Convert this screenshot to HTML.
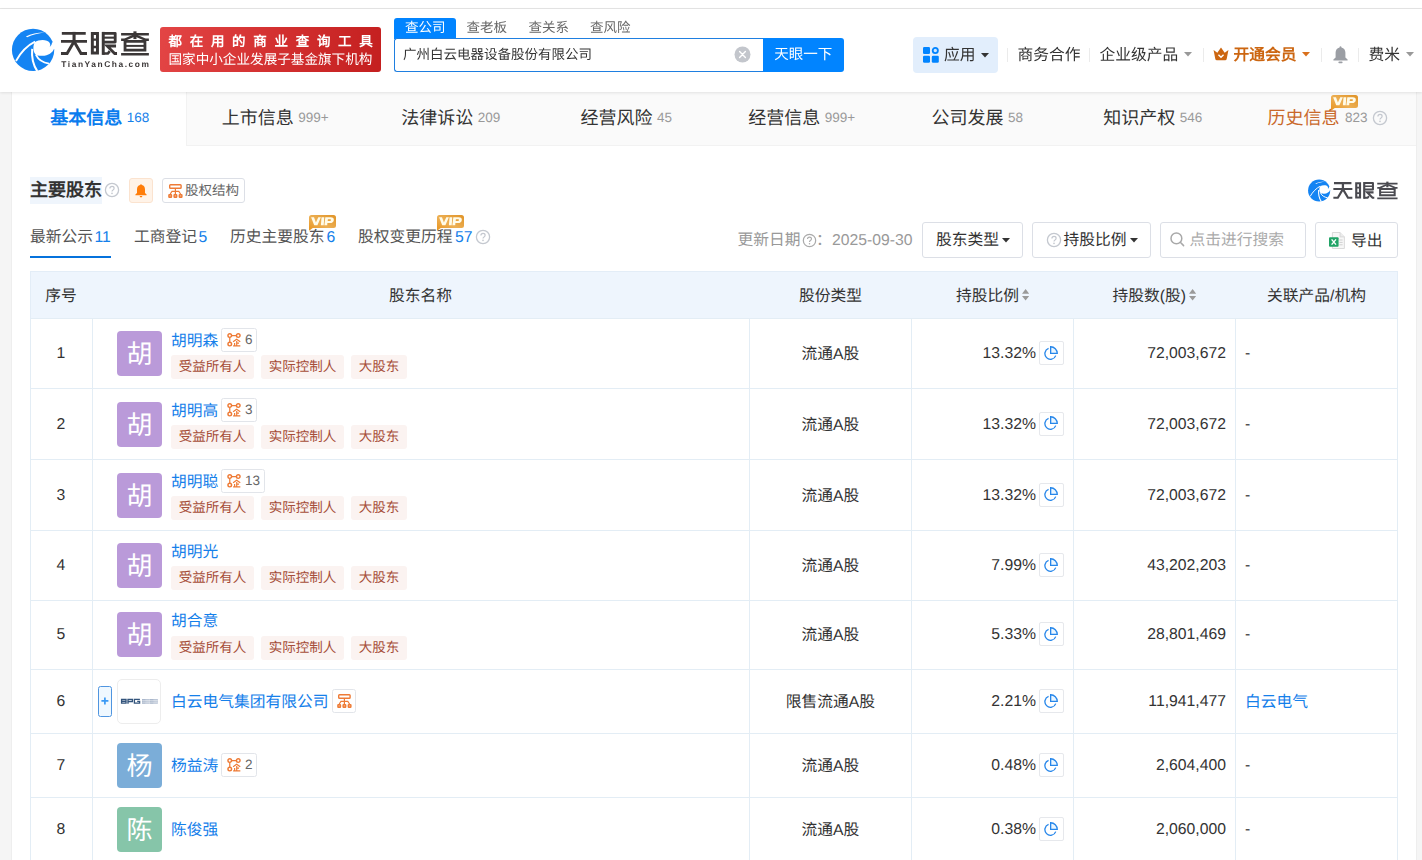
<!DOCTYPE html>
<html lang="zh-CN">
<head>
<meta charset="utf-8">
<title>天眼查</title>
<style>
*{box-sizing:border-box;margin:0;padding:0}
html,body{width:1422px;height:860px;overflow:hidden}
body{position:relative;text-rendering:geometricPrecision;opacity:.9999;font-weight:350;background:#f5f5f5;font-family:"Liberation Sans",sans-serif;color:#333;font-size:15.75px}
.abs{position:absolute}
.t{position:absolute;white-space:nowrap;line-height:1}
svg{display:block}
/* header */
#top{left:0;top:0;width:1422px;height:8px;background:#fff}
#topline{left:0;top:8px;width:1422px;height:1px;background:#e6e6e6}
#header{left:0;top:9px;width:1422px;height:83px;background:#fff;box-shadow:0 1px 3px rgba(0,0,0,.10);z-index:5}
#banner{left:160px;top:27px;width:221px;height:45px;border-radius:3px;background:linear-gradient(100deg,#e34545 0%,#d22f2f 55%,#c41f1f 100%);z-index:6;color:#fff}
.sep{position:absolute;top:48px;width:1px;height:14px;background:#ebebeb;z-index:6}
.hz{z-index:6}
/* card */
#card{left:11px;top:92px;width:1406px;height:768px;background:#fff;border-left:1px solid #eee;border-right:1px solid #eee}
#tabbar{left:12px;top:92px;width:1404px;height:54px;background:#fafafa;border-bottom:1px solid #f2f2f2}
#tabact{left:12px;top:92px;width:174.6px;height:54px;background:#fff;border-right:1px solid #f2f2f2}
.tab{position:absolute;top:92px;height:54px;width:175.5px;text-align:center;white-space:nowrap;line-height:52px;font-size:18px;color:#333}
.tab i{font-style:normal;font-size:13.5px;color:#999;margin-left:4.4px;position:relative;top:-2px}
/* table */
#thead{left:30px;top:271px;width:1368px;height:47px;background:#eef5fd;border:1px solid #e3edf7;border-bottom:none}
.hl{position:absolute;left:30px;width:1368px;height:1px;background:#e3edf5}
.vl{position:absolute;top:318px;width:1px;height:542px;background:#e3edf5}
.th{position:absolute;top:271px;height:47px;line-height:51px;text-align:center;white-space:nowrap;font-size:15.75px;color:#333}
.c{position:absolute;white-space:nowrap;font-size:15.75px;line-height:20px;height:20px;color:#333}
.num{left:30px;width:62px;text-align:center}
.typ{left:750px;width:161px;text-align:center}
.pct{left:912px;width:124px;text-align:right}
.cnt{left:1074px;width:152px;text-align:right}
.rel{left:1245px}
.av{position:absolute;left:117px;width:45px;height:45px;border-radius:4px;color:#fff;font-size:26px;line-height:47px;text-align:center}
.nm{position:absolute;left:171px;font-size:15.75px;line-height:20px;color:#1580ea;white-space:nowrap}
.bd{position:absolute;height:24px;border:1px solid #e2e5ea;border-radius:2.5px}
.bd span{position:absolute;left:23px;top:4px;font-size:13.5px;line-height:14px;color:#666}
.tag{position:absolute;height:24px;border-radius:3px;background:#fbf3f1;color:#a64d38;font-size:13.5px;line-height:23px;text-align:center;white-space:nowrap}
.pie{position:absolute;left:1039.3px;width:24.6px;height:24.4px;border:1px solid #e6e8ec;border-radius:2px;background:#fff}
.btn{position:absolute;top:222px;height:36px;border:1px solid #dcdfe6;border-radius:3px}
</style>
</head>
<body>
<div class="abs" id="top"></div>
<div class="abs" id="topline"></div>
<div class="abs" id="header"></div>
<!-- logo swirl -->
<svg class="abs hz" style="left:8px;top:24px" width="52" height="52" viewBox="0 0 860 860">
<defs><g id="swirl">
<circle cx="415" cy="428" r="350" fill="#1484f3"/>
<path d="M440,300 C520,250 650,250 688,312 C702,340 702,362 690,382 L800,372 L800,418 L762,408 C742,470 660,530 560,526 C500,522 470,520 470,520 C428,480 398,400 440,300 Z" fill="#fff"/>
<path d="M688,384 C712,362 729,335 727,308 L800,290 L800,414 L764,408 Z" fill="#fff"/>
<path d="M296,206 C380,160 500,138 606,140 C500,156 400,178 318,218 Z" fill="#fff"/>
<path d="M448,292 C330,350 210,470 132,612" fill="none" stroke="#fff" stroke-width="30"/>
<path d="M400,410 C388,540 420,680 484,780" fill="none" stroke="#fff" stroke-width="34"/>
<path d="M462,512 C500,590 580,640 678,656" fill="none" stroke="#fff" stroke-width="30"/>
</g>
<g id="tyc" fill="none" stroke-linecap="butt" stroke-linejoin="miter">
<path d="M97,119 H437 M85,233 H455" stroke-width="42"/>
<path d="M271,98 V250" stroke-width="44"/>
<path d="M271,236 L172,405 H85 M271,236 L370,405 H455" stroke-width="42"/>
<path d="M531,121 H604 V399 H531 Z" stroke-width="42"/>
<path d="M531,208 H604 M531,312 H604" stroke-width="34"/>
<path d="M686,98 V425" stroke-width="42"/>
<path d="M686,118 H856 V243 H686" stroke-width="40" stroke-linejoin="round"/>
<path d="M686,180 H856" stroke-width="30"/>
<path d="M868,299 H742 L848,405 H882" stroke-width="40"/>
<path d="M686,405 H752 L778,372" stroke-width="38"/>
<path d="M940,131 H1335 M940,416 H1335" stroke-width="34"/>
<path d="M1137,90 V200" stroke-width="44"/>
<path d="M940,210 H988 L1122,150 M1335,210 H1288 L1152,150" stroke-width="34"/>
<path d="M996,233 H1279 V357 H996 Z" stroke-width="40"/>
<path d="M996,297 H1279" stroke-width="28"/>
</g></defs>
<use href="#swirl"/></svg>
<svg class="abs hz" style="left:55px;top:25px" width="100" height="50" viewBox="0 0 1422 711"><use href="#tyc" stroke="#3b3737"/></svg>
<div class="t hz" style="left:61.3px;top:60px;font-size:8.4px;font-weight:bold;letter-spacing:1.56px;color:#3b3737">TianYanCha.com</div>
<!-- banner -->
<div class="abs" id="banner">
<div class="t" style="left:8.5px;top:8px;font-family:'Liberation Serif',serif;font-weight:bold;font-size:13.5px;letter-spacing:7.7px">都在用的商业查询工具</div>
<div class="t" style="left:8.5px;top:26px;font-size:13.6px">国家中小企业发展子基金旗下机构</div>
</div>
<!-- search -->
<div class="abs hz" style="left:394px;top:18px;width:62px;height:21px;background:#0084ff;border-radius:3px 3px 0 0"></div>
<div class="t hz" style="left:405px;top:21.2px;font-size:13.5px;color:#fff">查公司</div>
<div class="t hz" style="left:466.5px;top:21.2px;font-size:13.5px;color:#666">查老板</div>
<div class="t hz" style="left:528.5px;top:21.2px;font-size:13.5px;color:#666">查关系</div>
<div class="t hz" style="left:590px;top:21.2px;font-size:13.5px;color:#666">查风险</div>
<div class="abs hz" style="left:394px;top:38px;width:370px;height:34px;border:1px solid #1f7fe0;border-right:none;border-radius:3px 0 0 3px;background:#fff"></div>
<div class="t hz" style="left:403px;top:48.2px;font-size:13.5px;color:#333">广州白云电器设备股份有限公司</div>
<svg class="abs hz" style="left:733.5px;top:45.5px" width="17" height="17" viewBox="0 0 17 17"><circle cx="8.5" cy="8.5" r="8" fill="#c3c6cc"/><path d="M5.6,5.6 L11.4,11.4 M11.4,5.6 L5.6,11.4" stroke="#fff" stroke-width="1.4" stroke-linecap="round"/></svg>
<div class="abs hz" style="left:763px;top:38px;width:81px;height:34px;background:#0084ff;border-radius:0 3px 3px 0"></div>
<div class="t hz" style="left:774.3px;top:48.2px;font-size:14.5px;color:#fff">天眼一下</div>
<!-- right nav -->
<div class="abs hz" style="left:913px;top:37px;width:85px;height:36px;background:#e2eefc;border-radius:4px"></div>
<svg class="abs hz" style="left:923px;top:47px" width="16" height="16" viewBox="0 0 16 16"><rect x="0" y="0" width="7" height="7" rx="1.3" fill="#0084ff"/><rect x="0" y="8.8" width="7" height="7" rx="1.3" fill="#0084ff"/><rect x="8.8" y="8.8" width="7" height="7" rx="1.3" fill="#0084ff"/><circle cx="12.3" cy="3.5" r="2.6" fill="#cfe6ff" stroke="#0084ff" stroke-width="1.8"/></svg>
<div class="t hz" style="left:944px;top:47.5px;font-size:15.75px;color:#333">应用</div>
<svg class="abs hz" style="left:981px;top:53px" width="8" height="5" viewBox="0 0 8 5"><path d="M0,0 H8 L4,4.6 Z" fill="#333"/></svg>
<div class="sep" style="left:1007px"></div>
<div class="t hz" style="left:1017.5px;top:47.5px;font-size:15.75px;color:#333">商务合作</div>
<div class="sep" style="left:1089px"></div>
<div class="t hz" style="left:1099.5px;top:47.5px;font-size:15.75px;color:#333">企业级产品</div>
<svg class="abs hz" style="left:1183.5px;top:52px" width="8" height="5" viewBox="0 0 8 5"><path d="M0,0 H8 L4,4.6 Z" fill="#999"/></svg>
<div class="sep" style="left:1203px"></div>
<svg class="abs hz" style="left:1212.8px;top:47.1px" width="16" height="13.6" viewBox="0 0 17 14" preserveAspectRatio="none"><path d="M0.6,3.2 L4.6,6 L8.5,0.4 L12.4,6 L16.4,3.2 L14.6,12 Q14.4,13.6 12.8,13.6 H4.2 Q2.6,13.6 2.4,12 Z" fill="#cc6611"/><path d="M5.8,8 L8.5,10.6 L11.2,8" fill="none" stroke="#fff" stroke-width="1.5"/></svg>
<div class="t hz" style="left:1233.5px;top:47.5px;font-size:15.75px;font-weight:bold;color:#cc6611">开通会员</div>
<svg class="abs hz" style="left:1301.5px;top:52px" width="8" height="5" viewBox="0 0 8 5"><path d="M0,0 H8 L4,4.6 Z" fill="#d9701c"/></svg>
<div class="sep" style="left:1321px"></div>
<svg class="abs hz" style="left:1333px;top:46px" width="15" height="18" viewBox="0 0 15 18"><path d="M7.5,0.3 Q8.4,0.3 8.5,1.4 C11,2 12.4,4 12.4,6.6 V11.6 L14.6,13.6 V14.4 H0.4 V13.6 L2.6,11.6 V6.6 C2.6,4 4,2 6.5,1.4 Q6.6,0.3 7.5,0.3 Z" fill="#9b9ea4"/><rect x="5.4" y="15.6" width="4.2" height="1.6" rx="0.8" fill="#9b9ea4"/></svg>
<div class="sep" style="left:1358px"></div>
<div class="t hz" style="left:1368.5px;top:47.5px;font-size:15.75px;color:#333">费米</div>
<svg class="abs hz" style="left:1405.5px;top:52px" width="8" height="5" viewBox="0 0 8 5"><path d="M0,0 H8 L4,4.6 Z" fill="#999"/></svg>

<div class="abs" id="card"></div>
<div class="abs" id="tabbar"></div>
<div class="abs" id="tabact"></div>
<div class="tab" style="left:12px;color:#0a7cee;font-weight:bold">基本信息<i style="color:#1580ea;font-weight:normal">168</i></div>
<div class="tab" style="left:187.5px">上市信息<i>999+</i></div>
<div class="tab" style="left:363px">法律诉讼<i>209</i></div>
<div class="tab" style="left:538.5px">经营风险<i>45</i></div>
<div class="tab" style="left:714px">经营信息<i>999+</i></div>
<div class="tab" style="left:889.5px">公司发展<i>58</i></div>
<div class="tab" style="left:1065px">知识产权<i>546</i></div>
<div class="t" style="left:1267.5px;top:108.5px;font-size:18px;color:#c9682a">历史信息</div>
<div class="t" style="left:1345px;top:110.6px;font-size:13.5px;color:#999">823</div>
<svg class="abs" style="left:1372px;top:110px" width="16" height="16" viewBox="0 0 16 16"><use href="#qm" color="#c4c8cf"/></svg>
<svg class="abs" style="left:1331px;top:95px" width="27" height="16" viewBox="0 0 27 16"><use href="#vip"/></svg>

<svg width="0" height="0" style="position:absolute"><defs>
<g id="qm"><circle cx="8" cy="8" r="6.6" fill="none" stroke="currentColor" stroke-width="1.3"/><path d="M5.9,6.5 Q5.9,4.4 8,4.4 Q10.1,4.4 10.1,6.2 Q10.1,7.3 9,8 Q8,8.6 8,9.6" fill="none" stroke="currentColor" stroke-width="1.2"/><circle cx="8" cy="11.4" r="0.8" fill="currentColor"/></g>
<linearGradient id="vg" x1="0" y1="1" x2="1" y2="0"><stop offset="0" stop-color="#e8931c"/><stop offset="0.45" stop-color="#edb055"/><stop offset="1" stop-color="#e09326"/></linearGradient>
<g id="vip"><path d="M2.5,0 H24.5 Q27,0 27,2.5 V10.5 Q27,13 24.5,13 H3.8 L0,15.7 V2.5 Q0,0 2.5,0 Z" fill="url(#vg)"/><path d="M2.1,2.2 H5.0 L6.9,7.6 L9.3,2.2 H11.9 L8.4,10.3 H5.2 Z M12.5,2.2 H15.3 L14.7,10.3 H11.9 Z M16.3,2.2 H21.6 Q25.2,2.2 24.8,5.2 Q24.4,8.0 21.0,8.0 H18.4 L18.2,10.3 H15.4 Z M18.9,4.3 L18.7,6.0 H20.9 Q21.9,6.0 22.0,5.1 Q22.1,4.3 21.1,4.3 Z" fill="#fffbe8" fill-rule="evenodd"/></g>
<g id="org" fill="none" stroke="#ee7b36" stroke-width="1.4"><rect x="1.7" y="0.7" width="11.4" height="3.5" rx="0.8"/><path d="M7.4,4.4 V7.4 M2.2,10 L4,7.4 H10.8 L12.6,10 M7.4,7.4 V10" stroke-width="1.2"/><rect x="0.9" y="10.6" width="2.6" height="2.7" rx="0.5" fill="#f7b48a"/><rect x="6.1" y="10.6" width="2.6" height="2.7" rx="0.5" fill="#f7b48a"/><rect x="11.3" y="10.6" width="2.6" height="2.7" rx="0.5" fill="#f7b48a"/></g>
<g id="gq" fill="none" stroke="#ee7b36" stroke-width="1.5"><circle cx="2.9" cy="2.7" r="1.9"/><circle cx="11.8" cy="2.7" r="1.9"/><circle cx="2.9" cy="11.6" r="1.9"/><path d="M4.8,2.7 H9.9 M2.9,4.6 V9.7" stroke-width="1.3"/><path d="M6.4,9.2 L10.1,6.5 L13.9,9.2 M10.2,8.4 V13.4 M8,10.6 V13.4 M10.2,10.6 H12.6 M6.4,13.6 H14" stroke-width="1.25"/></g>
<g id="piei" fill="none" stroke="#2686ea" stroke-width="1.3"><path d="M4.58,2.44 A5.6,5.6 0 1 0 11.76,9.62"/><path d="M6.65,7.35 V0.75 A6.6,6.6 0 0 1 13.25,7.35 Z" fill="#eaf6ff"/></g>
<g id="sorti"><path d="M3.6,0 L7.2,4.7 H0 Z M0,6.9 H7.2 L3.6,11.6 Z" fill="#9a9a9a"/></g>
</defs></svg>
<!-- section title -->
<div class="abs" style="left:30px;top:177px;width:72px;height:27px;background:#eff5fc"></div>
<div class="t" style="left:30px;top:180.5px;font-size:18px;font-weight:bold;color:#333">主要股东</div>
<svg class="abs" style="left:104px;top:182px" width="16" height="16" viewBox="0 0 16 16"><use href="#qm" color="#c4c8cf"/></svg>
<div class="abs" style="left:129px;top:178px;width:24px;height:24.5px;background:#fff3e8;border:1px solid #fbe3cf;border-radius:3px"></div>
<svg class="abs" style="left:135px;top:183.5px" width="12" height="14" viewBox="0 0 12 14"><path d="M6,0.2 Q6.8,0.2 6.9,1.1 C9,1.6 10,3.3 10,5.4 V9 L11.6,10.6 V11.2 H0.4 V10.6 L2,9 V5.4 C2,3.3 3,1.6 5.1,1.1 Q5.2,0.2 6,0.2 Z" fill="#ff7d0a"/><path d="M4.6,12 H7.4 Q7.2,13.4 6,13.4 Q4.8,13.4 4.6,12 Z" fill="#ff7d0a"/></svg>
<div class="abs" style="left:162px;top:178px;width:83px;height:24.5px;background:#fff;border:1px solid #dcdfe6;border-radius:3px"></div>
<svg class="abs" style="left:167.5px;top:183.5px" width="15" height="14" viewBox="0 0 15 14"><use href="#org"/></svg>
<div class="t" style="left:185px;top:183.5px;font-size:13.5px;color:#666">股权结构</div>
<!-- watermark logo -->
<svg class="abs" style="left:1305.9px;top:177.3px" width="27.2" height="27.2" viewBox="0 0 860 860"><use href="#swirl"/></svg>
<svg class="abs" style="left:1328.9px;top:177.1px" width="73" height="36.5" viewBox="0 0 1422 711"><use href="#tyc" stroke="#4a4a50"/></svg>
<!-- sub tabs -->
<div class="t" style="left:30px;top:230px;font-size:15.75px;color:#555">最新公示</div>
<div class="t" style="left:94.5px;top:230px;font-size:15.75px;color:#1580ea">11</div>
<div class="abs" style="left:30px;top:256px;width:81px;height:2px;background:#0572dc"></div>
<div class="t" style="left:134px;top:230px;font-size:15.75px;color:#555">工商登记</div>
<div class="t" style="left:198.5px;top:230px;font-size:15.75px;color:#1580ea">5</div>
<div class="t" style="left:230px;top:230px;font-size:15.75px;color:#555">历史主要股东</div>
<div class="t" style="left:326.5px;top:230px;font-size:15.75px;color:#1580ea">6</div>
<svg class="abs" style="left:309px;top:214.8px" width="27" height="16" viewBox="0 0 27 16"><use href="#vip"/></svg>
<div class="t" style="left:358px;top:230px;font-size:15.75px;color:#555">股权变更历程</div>
<div class="t" style="left:455px;top:230px;font-size:15.75px;color:#1580ea">57</div>
<svg class="abs" style="left:475px;top:229px" width="16" height="16" viewBox="0 0 16 16"><use href="#qm" color="#c4c8cf"/></svg>
<svg class="abs" style="left:437px;top:214.8px" width="27" height="16" viewBox="0 0 27 16"><use href="#vip"/></svg>
<!-- right controls -->
<div class="t" style="left:737.5px;top:232.6px;font-size:15.75px;color:#999">更新日期</div>
<svg class="abs" style="left:802px;top:232.5px" width="15" height="15" viewBox="0 0 16 16"><use href="#qm" color="#aaa"/></svg>
<div class="t" style="left:816px;top:232.6px;font-size:15.75px;color:#999">：</div>
<div class="t" style="left:832px;top:232.6px;font-size:15.75px;color:#999">2025-09-30</div>
<div class="btn" style="left:922px;width:101px"></div>
<div class="t" style="left:936px;top:232.6px;font-size:15.75px;color:#333">股东类型</div>
<svg class="abs" style="left:1002px;top:238px" width="8" height="5" viewBox="0 0 8 5"><path d="M0,0 H8 L4,4.6 Z" fill="#333"/></svg>
<div class="btn" style="left:1032px;width:119px"></div>
<svg class="abs" style="left:1046px;top:232px" width="16" height="16" viewBox="0 0 16 16"><use href="#qm" color="#c4c8cf"/></svg>
<div class="t" style="left:1063.5px;top:232.6px;font-size:15.75px;color:#333">持股比例</div>
<svg class="abs" style="left:1130px;top:238px" width="8" height="5" viewBox="0 0 8 5"><path d="M0,0 H8 L4,4.6 Z" fill="#333"/></svg>
<div class="btn" style="left:1160px;width:146px"></div>
<svg class="abs" style="left:1169px;top:231px" width="17" height="17" viewBox="0 0 17 17"><circle cx="7.4" cy="7.4" r="5.4" fill="none" stroke="#a9a9a9" stroke-width="1.5"/><path d="M11.3,11.3 L14.6,14.6" stroke="#a9a9a9" stroke-width="1.5" stroke-linecap="round"/></svg>
<div class="t" style="left:1189.5px;top:232.6px;font-size:15.75px;color:#aaa">点击进行搜索</div>
<div class="btn" style="left:1315px;width:83px"></div>
<svg class="abs" style="left:1329px;top:231.5px" width="16" height="17" viewBox="0 0 16 17"><path d="M3.4,0.5 H11 L15.4,4.9 V16.5 H3.4 Z" fill="#f7f7f7" stroke="#d6d6d6" stroke-width="0.9"/><path d="M11,0.5 V4.9 H15.4" fill="#ececec" stroke="#d6d6d6" stroke-width="0.9"/><path d="M10.4,8 H13.6 M10.4,10.4 H13.6 M10.4,12.8 H13.6" stroke="#cfcfcf" stroke-width="1"/><rect x="0" y="5.2" width="9.6" height="9.6" rx="1" fill="#21a366"/><path d="M2.6,7.4 L7,12.6 M7,7.4 L2.6,12.6" stroke="#fff" stroke-width="1.4"/></svg>
<div class="t" style="left:1351px;top:233.6px;font-size:15.75px;color:#333">导出</div>

<!--TB0-->
<div class="abs" id="thead"></div>
<div class="th" style="left:30px;width:62px">序号</div>
<div class="th" style="left:92px;width:657px">股东名称</div>
<div class="th" style="left:749.5px;width:162px">股份类型</div>
<div class="th" style="left:956px;text-align:left">持股比例</div>
<svg class="abs" style="left:1022px;top:289.4px" width="7.2" height="11.6" viewBox="0 0 7.2 11.6"><use href="#sorti"/></svg>
<div class="th" style="left:1112.5px;text-align:left">持股数(股)</div>
<svg class="abs" style="left:1189px;top:289.4px" width="7.2" height="11.6" viewBox="0 0 7.2 11.6"><use href="#sorti"/></svg>
<div class="th" style="left:1235.5px;width:162px">关联产品/机构</div>
<div class="hl" style="top:318px"></div>
<div class="hl" style="top:388px"></div>
<div class="hl" style="top:459px"></div>
<div class="hl" style="top:530px"></div>
<div class="hl" style="top:600px"></div>
<div class="hl" style="top:669px"></div>
<div class="hl" style="top:733px"></div>
<div class="hl" style="top:797px"></div>
<div class="vl" style="left:30px"></div>
<div class="vl" style="left:92px"></div>
<div class="vl" style="left:749px"></div>
<div class="vl" style="left:911px"></div>
<div class="vl" style="left:1073px"></div>
<div class="vl" style="left:1235px"></div>
<div class="vl" style="left:1397px"></div>
<div class="c num" style="top:344.0px">1</div>
<div class="c typ" style="top:345.0px">流通A股</div>
<div class="c pct" style="top:344.0px">13.32%</div>
<div class="pie" style="top:341.0px"><svg style="position:absolute;left:3.7px;top:3.8px" width="15" height="15" viewBox="0 0 15 15"><use href="#piei"/></svg></div>
<div class="c cnt" style="top:344.0px">72,003,672</div>
<div class="c rel" style="top:344.0px">-</div>
<div class="av" style="top:331.0px;background:#ba9ad9">胡</div>
<div class="nm" style="top:331.5px">胡明森</div>
<div class="bd" style="left:221px;top:328px;width:36px"><svg style="position:absolute;left:5.2px;top:4.2px" width="14.3" height="14.3" viewBox="0 0 15 15"><use href="#gq"/></svg><span>6</span></div>
<div class="tag" style="left:171px;top:355px;width:83px">受益所有人</div>
<div class="tag" style="left:261px;top:355px;width:83px">实际控制人</div>
<div class="tag" style="left:351px;top:355px;width:56px">大股东</div>
<div class="c num" style="top:414.5px">2</div>
<div class="c typ" style="top:415.5px">流通A股</div>
<div class="c pct" style="top:414.5px">13.32%</div>
<div class="pie" style="top:411.5px"><svg style="position:absolute;left:3.7px;top:3.8px" width="15" height="15" viewBox="0 0 15 15"><use href="#piei"/></svg></div>
<div class="c cnt" style="top:414.5px">72,003,672</div>
<div class="c rel" style="top:414.5px">-</div>
<div class="av" style="top:401.5px;background:#ba9ad9">胡</div>
<div class="nm" style="top:401.5px">胡明高</div>
<div class="bd" style="left:221px;top:398px;width:36px"><svg style="position:absolute;left:5.2px;top:4.2px" width="14.3" height="14.3" viewBox="0 0 15 15"><use href="#gq"/></svg><span>3</span></div>
<div class="tag" style="left:171px;top:425.4px;width:83px">受益所有人</div>
<div class="tag" style="left:261px;top:425.4px;width:83px">实际控制人</div>
<div class="tag" style="left:351px;top:425.4px;width:56px">大股东</div>
<div class="c num" style="top:485.5px">3</div>
<div class="c typ" style="top:486.5px">流通A股</div>
<div class="c pct" style="top:485.5px">13.32%</div>
<div class="pie" style="top:482.5px"><svg style="position:absolute;left:3.7px;top:3.8px" width="15" height="15" viewBox="0 0 15 15"><use href="#piei"/></svg></div>
<div class="c cnt" style="top:485.5px">72,003,672</div>
<div class="c rel" style="top:485.5px">-</div>
<div class="av" style="top:472.5px;background:#ba9ad9">胡</div>
<div class="nm" style="top:472.5px">胡明聪</div>
<div class="bd" style="left:221px;top:469px;width:44px"><svg style="position:absolute;left:5.2px;top:4.2px" width="14.3" height="14.3" viewBox="0 0 15 15"><use href="#gq"/></svg><span>13</span></div>
<div class="tag" style="left:171px;top:496.2px;width:83px">受益所有人</div>
<div class="tag" style="left:261px;top:496.2px;width:83px">实际控制人</div>
<div class="tag" style="left:351px;top:496.2px;width:56px">大股东</div>
<div class="c num" style="top:556.0px">4</div>
<div class="c typ" style="top:557.0px">流通A股</div>
<div class="c pct" style="top:556.0px">7.99%</div>
<div class="pie" style="top:553.0px"><svg style="position:absolute;left:3.7px;top:3.8px" width="15" height="15" viewBox="0 0 15 15"><use href="#piei"/></svg></div>
<div class="c cnt" style="top:556.0px">43,202,203</div>
<div class="c rel" style="top:556.0px">-</div>
<div class="av" style="top:543.0px;background:#ba9ad9">胡</div>
<div class="nm" style="top:542.5px">胡明光</div>
<div class="tag" style="left:171px;top:565.9px;width:83px">受益所有人</div>
<div class="tag" style="left:261px;top:565.9px;width:83px">实际控制人</div>
<div class="tag" style="left:351px;top:565.9px;width:56px">大股东</div>
<div class="c num" style="top:625.1px">5</div>
<div class="c typ" style="top:626.1px">流通A股</div>
<div class="c pct" style="top:625.1px">5.33%</div>
<div class="pie" style="top:622.1px"><svg style="position:absolute;left:3.7px;top:3.8px" width="15" height="15" viewBox="0 0 15 15"><use href="#piei"/></svg></div>
<div class="c cnt" style="top:625.1px">28,801,469</div>
<div class="c rel" style="top:625.1px">-</div>
<div class="av" style="top:612.1px;background:#ba9ad9">胡</div>
<div class="nm" style="top:612.3px">胡合意</div>
<div class="tag" style="left:171px;top:635.5px;width:83px">受益所有人</div>
<div class="tag" style="left:261px;top:635.5px;width:83px">实际控制人</div>
<div class="tag" style="left:351px;top:635.5px;width:56px">大股东</div>
<div class="c num" style="top:692.0px">6</div>
<div class="c typ" style="top:693.0px">限售流通A股</div>
<div class="c pct" style="top:692.0px">2.21%</div>
<div class="pie" style="top:689.0px"><svg style="position:absolute;left:3.7px;top:3.8px" width="15" height="15" viewBox="0 0 15 15"><use href="#piei"/></svg></div>
<div class="c cnt" style="top:692.0px">11,941,477</div>
<div class="c rel" style="top:692.8px;color:#1580ea">白云电气</div>
<div class="nm" style="top:693.0px">白云电气集团有限公司</div>
<div class="bd" style="left:331.5px;top:689.0px;width:24.5px"><svg style="position:absolute;left:4px;top:4px" width="15" height="14" viewBox="0 0 15 14"><use href="#org"/></svg></div>
<div class="c num" style="top:756.0px">7</div>
<div class="c typ" style="top:757.0px">流通A股</div>
<div class="c pct" style="top:756.0px">0.48%</div>
<div class="pie" style="top:753.0px"><svg style="position:absolute;left:3.7px;top:3.8px" width="15" height="15" viewBox="0 0 15 15"><use href="#piei"/></svg></div>
<div class="c cnt" style="top:756.0px">2,604,400</div>
<div class="c rel" style="top:756.0px">-</div>
<div class="av" style="top:743.0px;background:#7badd8">杨</div>
<div class="nm" style="top:757.0px">杨益涛</div>
<div class="bd" style="left:221px;top:753.0px;width:36px"><svg style="position:absolute;left:5.2px;top:4.2px" width="14.3" height="14.3" viewBox="0 0 15 15"><use href="#gq"/></svg><span>2</span></div>
<div class="c num" style="top:820.0px">8</div>
<div class="c typ" style="top:821.0px">流通A股</div>
<div class="c pct" style="top:820.0px">0.38%</div>
<div class="pie" style="top:817.0px"><svg style="position:absolute;left:3.7px;top:3.8px" width="15" height="15" viewBox="0 0 15 15"><use href="#piei"/></svg></div>
<div class="c cnt" style="top:820.0px">2,060,000</div>
<div class="c rel" style="top:820.0px">-</div>
<div class="av" style="top:807.0px;background:#86c5a9">陈</div>
<div class="nm" style="top:821.0px">陈俊强</div>
<div class="abs" style="left:98px;top:686px;width:14px;height:31px;border:1.2px solid #4f95e0;border-radius:2.5px;background:#eff8ff"></div>
<svg class="abs" style="left:101px;top:697px" width="8" height="8" viewBox="0 0 8 8"><path d="M3.9,0.4 V7.4 M0.4,3.9 H7.4" stroke="#3a99f5" stroke-width="1.7"/></svg>
<div class="abs" style="left:117.3px;top:679.2px;width:44.2px;height:44.4px;border:1px solid #ededed;border-radius:5px;background:#fff"></div>
<svg class="abs" style="left:120px;top:698px" width="40" height="7" viewBox="0 0 40 7"><g fill="none" stroke="#33547c" stroke-width="1.35"><path d="M1.6,1.4 H6 V5.1 H1.6 Z M1.6,3.25 H6"/><path d="M8,5.8 V1.4 H12.4 V3.5 H8.4"/><path d="M19.9,1.4 H14.4 V5.1 H19.6 V3.3 H17.2"/></g><g fill="#8d9fba"><rect x="22.2" y="0.9" width="3.5" height="4.9" rx="0.4"/><rect x="26.2" y="0.9" width="3.5" height="4.9" rx="0.4" opacity=".8"/><rect x="30.2" y="0.9" width="3.5" height="4.9" rx="0.4"/><rect x="34.2" y="0.9" width="3.5" height="4.9" rx="0.4" opacity=".8"/></g><g stroke="#fff" stroke-width="0.7" opacity=".75"><path d="M22.2,2.6 H37.7 M22.2,4.2 H37.7 M24,0.9 V5.8 M28,0.9 V5.8 M32,0.9 V5.8 M36,0.9 V5.8"/></g></svg>
<!--TB1-->
</body>
</html>
